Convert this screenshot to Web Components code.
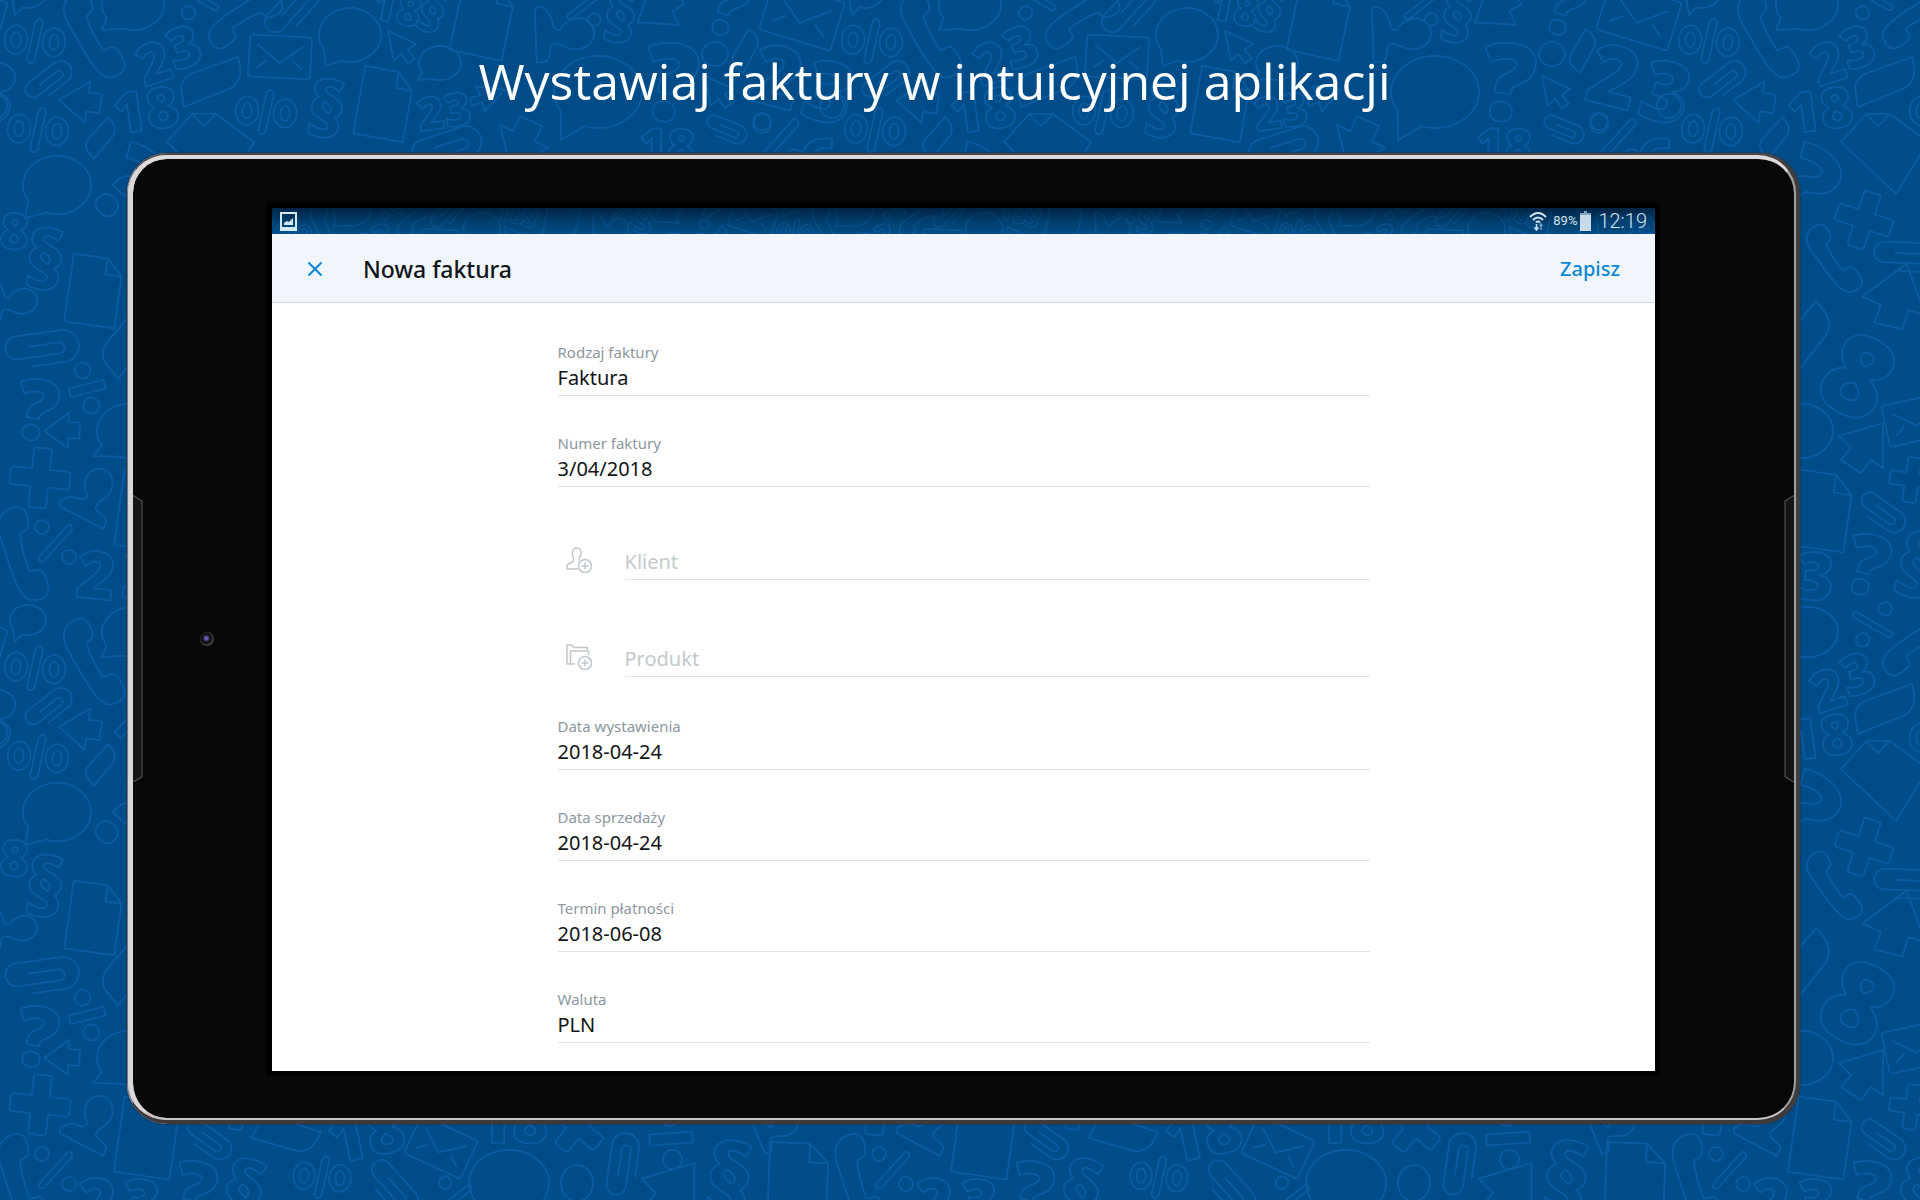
<!DOCTYPE html>
<html lang="pl">
<head>
<meta charset="utf-8">
<meta name="viewport" content="width=device-width, initial-scale=1">
<title>Wystawiaj faktury w intuicyjnej aplikacji</title>
<style>
html, body { margin: 0; background: #004c88; }
body { font-family: "Noto Sans", "Open Sans", sans-serif; }
</style>
</head>
<body>
<promo-page>
  <span slot="headline">Wystawiaj faktury w intuicyjnej aplikacji</span>
  <tablet-frame>
    <status-bar battery="89%" time="12:19"></status-bar>
    <app-header action="Zapisz">Nowa faktura</app-header>
    <invoice-form>
      <form-field label="Rodzaj faktury" value="Faktura" kind="select"></form-field>
      <form-field label="Numer faktury" value="3/04/2018"></form-field>
      <link-group>
        <link-field label="Klient" icon="client"></link-field>
        <link-field label="Produkt" icon="product"></link-field>
      </link-group>
      <form-field label="Data wystawienia" value="2018-04-24"></form-field>
      <form-field label="Data sprzedaży" value="2018-04-24"></form-field>
      <form-field label="Termin płatności" value="2018-06-08"></form-field>
      <form-field label="Waluta" value="PLN" kind="select"></form-field>
    </invoice-form>
  </tablet-frame>
</promo-page>

<script>
class Base extends HTMLElement {
  connectedCallback() {
    if (this.shadowRoot) return;
    this.attachShadow({ mode: 'open' }).innerHTML = this.render();
  }
}

/* ---- doodle wallpaper: one 837x627 tile, repeated ---- */
const P = {
  phone: ['M-72-105C-62-132-18-148 0-130C14-112 14-96 12-78C10-64-12-66-12-54C-8-20 4 22 16 54C30 60 42 42 54 54C66 70 72 90 74 110C72 134 50 142 22 142C-20 140-48 20-72-50C-78-72-78-92-72-105Z', 3],
  person: ['M-4-36C-4-83 26-93 46-90C76-86 86-53 76-28C66 2 31 7 29 27C31 42 59 47 61 67L51 90L-74 24C-87 14-74-2-54-5C-24-10-9 10 3-5C9-13-4-18-4-36Z', 3],
  doc: ['M-28-38H10L28-20V38H-28ZM10-38V-20H28', 1],
  clip: ['M-12-3H18A5.500 5.500 0 0 1 18 8H-24A11.500 11.500 0 0 1-24-15H22A16 16 0 0 1 22 17H-12', 1],
  arrow: ['M-22 2L8-22V-10H22V10H8V22Z', 1],
  cursor: ['M-14-20L17 0L6 5L13 17L4 21L-2 9L-12 16Z', 1],
  burst: ['M-22-12L22-25V20L10 12L0 25L-20 12L-10 0Z', 1],
  plus: ['M-7-30H7Q10-30 9-26V-9H27Q31-9 30-5V6Q30 9 26 9H9V26Q9 30 5 30H-6Q-9 30-9 26V9H-27Q-30 9-30 5V-6Q-29-9-26-9H-9V-26Q-10-29-7-30Z', 1],
  mail: ['M-28-21H28Q31-21 31-18V18Q31 21 28 21H-28Q-31 21-31 18V-18Q-31-21-28-21ZM-22-11L0 6L22-11M-22 11L-13 4M22 11L13 4', 1],
  leaf: ['M-27 25L-30 6Q-29-5-18-9L27-25Q34-3 20 6Z', 1],
  pct: ['M-7-16A7 7 0 1 1-21-16A7 7 0 1 1-7-16ZM20 14A7 7 0 1 1 6 14A7 7 0 1 1 20 14ZM-17 14L12-18Q17-19 16-13L-12 18Q-18 20-17 14Z', 1],
  div: ['M8-18A8 8 0 1 1-8-18A8 8 0 1 1 8-18ZM8 18A8 8 0 1 1-8 18A8 8 0 1 1 8 18ZM-18-4H18V5H-18Z', 1],
  oo: ['M-8 0A12 15 0 1 1-32 0A12 15 0 1 1-8 0ZM-15 0A5 8 0 1 1-25 0A5 8 0 1 1-15 0ZM32 0A12 15 0 1 1 8 0A12 15 0 1 1 32 0ZM25 0A5 8 0 1 1 15 0A5 8 0 1 1 25 0ZM-1-20Q4-27 7-20L1 21Q-4 27-7 20Z', 1],
  env: ['M-33-12L-8-40H16L54-12L22 40ZM-8-40L4-28L16-40', 1]
};
/* [shape, centre x, centre y, rotation, scale] */
const ITEMS = [
  ['oo',35,41,4,.95],['oo',38,130,4,.95],['oo',266,112,4,.95],['oo',322,550,4,.9],
  ['phone',94,34,-12,.97],['phone',24,553,0,1],['phone',246,20,75,.85],['phone',160,258,-18,.8],
  ['clip',48,81,-38,.7],['clip',292,8,-48,.9],['clip',446,147,-18,.95],['clip',726,129,22,.58],['clip',41,348,-8,1],['clip',232,256,2,.9],['clip',208,512,35,.7],['clip',393,560,48,.85],['clip',622,538,-82,.85],['clip',210,500,215,.1],
  ['arrow',80,101,8,.95],['arrow',62,430,2,.8],['arrow',520,145,-65,1.2],
  ['cursor',402,46,-8,.85],['cursor',719,91,-8,.85],['cursor',487,98,100,.8],
  ['burst',218,301,-20,1.2],['burst',187,448,0,1],['burst',664,8,200,.9],['burst',668,566,0,1.2],
  ['plus',40,478,6,1],['plus',190,220,18,.95],['plus',238,480,8,.75],['plus',578,500,40,.9],
  ['mail',280,57,3,1],['mail',802,16,17,1.2],['mail',242,420,-12,1],['mail',441,520,25,1],
  ['leaf',211,82,0,1],['leaf',101,138,-28,.6],['leaf',286,508,38,.95],['leaf',746,51,-40,.6],['leaf',130,340,-30,1.1],
  ['pct',56,543,0,1],['pct',199,625,78,.95],['pct',779,141,0,1.2],['pct',585,5,10,.9],['pct',455,572,10,.9],
  ['div',87,388,-14,1],['div',671,511,-4,1.2],
  ['doc',94,291,8,.9],['doc',147,511,8,1],['doc',384,104,10,.9],['doc',483,20,12,.95],['doc',798,556,2,1.05],
  ['person',86,499,0,1],['person',6,298,60,.9],['person',556,30,60,1.1],['person',770,500,40,.8],
  ['env',200,154,0,1]
].filter(item => item[4] > .5);
/* [centre x, centre y, rx, ry, tail x, tail y] ; tail omitted for plain dots */
const BUBBLES = [
  [28,620,18,15,15,642],[133,5,31,25,102,30],[350,35,31,27,326,66],[440,63,21,17,418,80],[598,92,44,36,561,140],
  [57,185,34,29,25,218],[128,431,31,27,93,456],[509,556,40,33,480,594],[715,54,13,12],[577,556,16,18],[762,123,9,10],[832,106,12,12]
];
/* [text, centre x, centre y, size, rotation] */
const GLYPHS = [
  ['2',154,63,56,-18],['3',184,47,56,-18],['18',146,110,56,-8],['18',397,8,42,12],['§',432,12,56,20],['§',620,18,68,8],
  ['§',326,110,76,8],['23',444,111,46,-8],['?',671,82,108,8],['?',728,6,80,14],['2',777,76,84,14],['3',829,92,84,14],
  ['18',667,146,48,2],['6',818,162,64,0],['?',130,184,110,42],['§',45,260,80,6],['18',0,230,50,4],['?',37,410,84,10],
  ['8',184,376,112,28],['2',96,575,66,6],['3',141,576,66,4],['?',194,565,84,14],['§',243,566,86,14],['18',366,506,66,-12],
  ['18',512,494,62,0],['§',729,552,96,8]
];
class DoodlePattern extends Base {
  render() {
    const k = +(this.getAttribute('scale') || 1);
    const w = +(this.getAttribute('weight') || 1.5);
    const shapes = ITEMS.map(([n, x, y, r, s]) => {
      const f = s / P[n][1];
      return `<path transform="translate(${x} ${y}) rotate(${r}) scale(${f})" stroke-width="${w / f}" d="${P[n][0]}"/>`;
    }).join('');
    const bubbles = BUBBLES.map(([x, y, a, b, tx, ty]) => {
      if (tx === undefined) return `<ellipse cx="${x}" cy="${y}" rx="${a}" ry="${b}"/>`;
      const t = d => [x + a * Math.cos(d * Math.PI / 180), y + b * Math.sin(d * Math.PI / 180)].join(' ');
      return `<path d="M${t(148)}A${a} ${b} 0 1 1 ${t(108)}L${tx} ${ty}Z"/>`;
    }).join('');
    const glyphs = GLYPHS.map(([c, x, y, s, r]) =>
      `<text transform="translate(${x} ${y}) rotate(${r})" y="${Math.round(s * .36)}" font-size="${s}">${c}</text>`).join('');
    const uses = [-1, 0, 1].flatMap(i => [-1, 0, 1].map(j => `<use href="#t" x="${i * 837}" y="${j * 627}"/>`)).join('');
    return `<style>
      :host { display: block; overflow: hidden; }
      svg { display: block; width: 100%; height: 100%; }
      text { font-family: "Open Sans", "Noto Sans", sans-serif; font-weight: 800; text-anchor: middle; }
    </style>
    <svg aria-hidden="true"><defs>
      <g id="t" fill="none" stroke="#0a5ca2" stroke-width="${w}" stroke-linejoin="round" stroke-linecap="round">${shapes}${bubbles}${glyphs}</g>
      <pattern id="p" width="837" height="627" patternUnits="userSpaceOnUse" patternTransform="scale(${k})">${uses}</pattern>
    </defs><rect width="100%" height="100%" fill="url(#p)"/></svg>`;
  }
}

class PromoPage extends Base {
  render() {
    return `<style>
      :host { display: flex; flex-direction: column; position: relative; min-height: 100vh; box-sizing: border-box; overflow: hidden;
              background: #004c88; padding: 0 120px 76px 127px; }
      doodle-pattern { position: absolute; inset: 0; }
      h1 { position: relative; margin: 0; padding: 49px 58px 40px 0; font-size: 50px; line-height: 64px; font-weight: 400; color: #fff; text-align: center; font-family: "Open Sans", "Noto Sans", sans-serif; }
      main { position: relative; flex: 1; display: flex; }
      ::slotted(tablet-frame) { flex: 1; }
    </style>
    <doodle-pattern weight="1.7"></doodle-pattern>
    <h1><slot name="headline"></slot></h1>
    <main><slot></slot></main>`;
  }
}

class TabletFrame extends Base {
  render() {
    return `<style>
      :host { display: flex; position: relative; box-sizing: border-box; border-radius: 40px; padding: 6px;
        background: linear-gradient(90deg, #d9d7d8 0 50%, #3c3a3a 99%);
        box-shadow: 0 0 2px #23232b; }
      :host::before { content: ""; position: absolute; inset: 0; border-radius: 40px;
        border: solid; border-width: 2px 4px 4px 1px; border-color: #4a4648 #3f3d3d #3f3939 #77757a; }
      :host::after { content: ""; position: absolute; inset: 2px 4px 4px 1px; border-radius: 38px;
        border: solid; border-width: 4px 2px 2px 5px; border-color: #dedadb #a3a0a2 #c9c4c8 #d9d7d9; }
      .bezel { position: relative; flex: 1; display: flex; background: #080808; border-radius: 34px; padding: 44px 134px 42px; }
      .screen { flex: 1; display: flex; flex-direction: column; background: #fff; border: 5px solid #000; }
      .grip { position: absolute; top: 35%; height: 30%; width: 10px; color: #5a5a5a; }
      .l { left: 0; } .r { right: 0; transform: scaleX(-1); }
      .cam { position: absolute; left: 67px; top: 50%; width: 14px; height: 14px; border-radius: 50%; translate: 0 -50%;
        background: radial-gradient(circle at 45% 45%, #6b62b8 0 1px, #2b2750 3px, #0c0c0e 4px, #111 5px, #444 7px); }
    </style>
    <div class="bezel">
      <svg class="grip l" viewBox="0 0 10 286" preserveAspectRatio="none" fill="#151515" stroke="currentColor" aria-hidden="true"><path d="M0 .5L9 6V280L0 285.500"/></svg>
      <svg class="grip r" viewBox="0 0 10 286" preserveAspectRatio="none" fill="#151515" stroke="currentColor" aria-hidden="true"><path d="M0 .5L9 6V280L0 285.500"/></svg>
      <div class="cam"></div>
      <div class="screen"><slot></slot></div>
    </div>`;
  }
}

class StatusBar extends Base {
  render() {
    return `<style>
      :host { display: flex; align-items: center; position: relative; height: 26px; padding: 0 8px; background: #004c84; color: #d2e2ee; font-family: Roboto, sans-serif; }
      doodle-pattern { position: absolute; inset: 0; }
      .shade { position: absolute; inset: 0; background: linear-gradient(rgba(0,12,30,.65), rgba(0,12,30,.2) 55%, transparent); }
      .row { position: relative; flex: 1; display: flex; align-items: center; }
      svg { display: block; }
      .batt { margin: 0 7px 0 3px; }
      .wifi { margin: 0 6px 0 auto; }
      .pct { font-size: 13px; line-height: 16px; }
      .time { font-size: 20px; line-height: 24px; font-weight: 300; }
    </style>
    <doodle-pattern scale="0.6" weight="2.2"></doodle-pattern><div class="shade"></div>
    <div class="row">
      <svg width="17" height="19" viewBox="0 0 17 19" aria-hidden="true"><path fill="#d2e8f5" fill-rule="evenodd" d="M0 0H17V19H0ZM2 2V15H15V2ZM4 13V11L7 9L9 10L13 6V13Z"/></svg>
      <svg class="wifi" width="18" height="19" viewBox="0 0 18 19" fill="none" stroke="#d2e2ee" stroke-width="2" aria-hidden="true"><path d="M1 5Q9-3 17 5M4 8Q9 3 14 8M7 10.500Q9 8.500 11 10.500"/><path stroke-width="1.500" d="M7.500 12V18M5.500 15.500L7.500 18L9.500 15.500"/><path stroke="#6f9cc0" stroke-width="1.500" d="M12 18V12M10.500 14L12 12L13.500 14"/></svg>
      <span class="pct">${this.getAttribute('battery')}</span>
      <svg class="batt" width="11" height="20" viewBox="0 0 11 20" aria-hidden="true"><path fill="#7fa3bd" d="M4 0H7V2H11V5H0V2H4Z"/><path fill="#c9dbe8" d="M0 4H11V20H0Z"/></svg>
      <span class="time">${this.getAttribute('time')}</span>
    </div>`;
  }
}

class AppHeader extends Base {
  render() {
    return `<style>
      :host { display: flex; align-items: center; box-sizing: border-box; height: 69px; padding: 1px 35px 0; background: #f1f6fc; border-bottom: 1px solid #cdd5da; }
      button { border: 0; background: none; padding: 0; font: inherit; color: #0b87d6; cursor: pointer; }
      svg { display: block; }
      h2 { flex: 1; margin: 0 0 0 40px; font-size: 23px; line-height: 32px; font-weight: 500; color: #111418; }
      .save { font-size: 20px; line-height: 28px; font-weight: 500; }
    </style>
    <button type="button" aria-label="Zamknij"><svg width="16" height="16" viewBox="0 0 16 16" stroke="#0b87d6" stroke-width="2" aria-hidden="true"><path d="M1.500 1.500L14.500 14.500M14.500 1.500L1.500 14.500"/></svg></button>
    <h2><slot></slot></h2>
    <button class="save" type="button">${this.getAttribute('action')}</button>`;
  }
}

class InvoiceForm extends Base {
  render() {
    return `<style>
      :host { display: block; flex: 1; padding: 41px 24px 28px; }
      form { display: flex; flex-direction: column; gap: 39px; max-width: 812px; margin: 0 auto; }
    </style><form><slot></slot></form>`;
  }
}

const CONTROL = `
  input, select { display: block; width: 100%; height: 28px; box-sizing: border-box; margin: 0; padding: 0; border: 0; outline: 0;
    background: none; appearance: none; font: 400 20px/28px "Noto Sans", "Open Sans", sans-serif; color: #121416; }
  input::placeholder { color: #c3cace; opacity: 1; }
  .line { padding-bottom: 3px; border-bottom: 1px solid #e1e5e7; }`;

class FormField extends Base {
  render() {
    const v = this.getAttribute('value');
    const control = this.getAttribute('kind') === 'select'
      ? `<select id="c"><option>${v}</option></select>`
      : `<input id="c" type="text" value="${v}">`;
    return `<style>
      :host { display: block; }
      label { display: block; padding-bottom: 4px; font-size: 15px; line-height: 16px; color: #8c979e; }
      ${CONTROL}
    </style>
    <label for="c">${this.getAttribute('label')}</label>
    <div class="line">${control}</div>`;
  }
}

class LinkGroup extends Base {
  render() {
    return `<style>:host { display: flex; flex-direction: column; gap: 43px; padding-bottom: 2px; }</style><slot></slot>`;
  }
}

class LinkField extends Base {
  render() {
    const plus = '<circle cx="19" cy="19" r="6.500"/><path d="M19 15.500V22.500M15.500 19H22.500"/>';
    const icons = {
      client: '<path d="M12 22H1V19C1 16.500 4 16 6.500 15C8 14 8 12.500 7.500 11C5.500 8 5.500 1 11 1C16.500 1 15.500 8 13.500 11C13 12 13 13 13.500 13.500"/>',
      product: '<path d="M9 20H1V1H6L7.500 3.500H21V6M4.500 20V7H22.500V11"/>'
    };
    return `<style>
      :host { display: flex; align-items: flex-end; height: 54px; }
      svg { display: block; margin: 0 33px 7px 8px; flex: none; }
      .line { flex: 1; }
      ${CONTROL}
    </style>
    <svg width="26" height="26" viewBox="0 0 26 26" fill="none" stroke="#c0c8cd" stroke-width="1.500" aria-hidden="true">${icons[this.getAttribute('icon')]}${plus}</svg>
    <div class="line"><input type="text" aria-label="${this.getAttribute('label')}" placeholder="${this.getAttribute('label')}"></div>`;
  }
}

Object.entries({
  'doodle-pattern': DoodlePattern, 'promo-page': PromoPage, 'tablet-frame': TabletFrame, 'status-bar': StatusBar,
  'app-header': AppHeader, 'invoice-form': InvoiceForm, 'form-field': FormField, 'link-group': LinkGroup, 'link-field': LinkField
}).forEach(([name, cls]) => customElements.define(name, cls));
</script>
</body>
</html>
